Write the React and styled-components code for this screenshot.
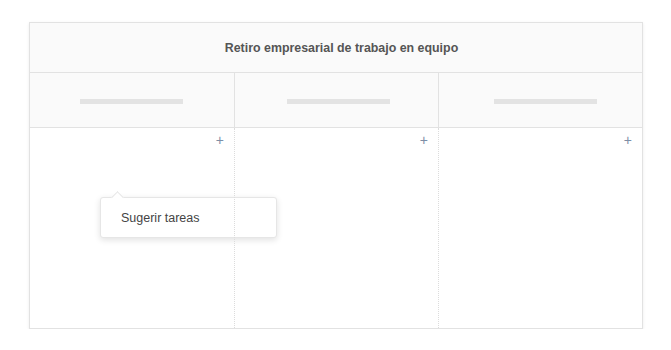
import React from "react";
import styled, { createGlobalStyle } from "styled-components";

const GlobalStyle = createGlobalStyle`
  html, body {
    margin: 0;
    background: #ffffff;
    font-family: "Liberation Sans", Arial, sans-serif;
  }
`;

const Page = styled.div`
  padding: 22px 28px 0 29px;
`;

const Board = styled.div`
  width: 614px;
  box-sizing: border-box;
  border: 1px solid #e2e2e2;
  box-shadow: 0 1px 3px rgba(0, 0, 0, 0.08);
  background: #fff;
`;

const TitleRow = styled.div`
  height: 49px;
  display: flex;
  align-items: center;
  justify-content: center;
  padding-left: 11px;
  background: #fafafa;
  border-bottom: 1px solid #e2e2e2;
  font-size: 12.4px;
  font-weight: 700;
  color: #555;
`;

const HeadRow = styled.div`
  display: grid;
  grid-template-columns: repeat(3, 1fr);
  height: 54px;
  background: #fafafa;
  border-bottom: 1px solid #e2e2e2;
`;

const HeadCell = styled.div`
  display: flex;
  align-items: center;
  padding-left: ${({ inset }) => inset}px;
  border-left: ${({ first }) => (first ? "none" : "1px solid #e2e2e2")};
`;

const Placeholder = styled.div`
  width: 103px;
  height: 5px;
  margin-top: 2px;
  background: #e3e3e3;
`;

const BodyRow = styled.div`
  display: grid;
  grid-template-columns: repeat(3, 1fr);
  height: 200px;
`;

const Column = styled.div`
  position: relative;
  border-left: ${({ first }) => (first ? "none" : "1px dotted #dcdcdc")};
`;

const AddButton = styled.div`
  position: absolute;
  top: 5px;
  right: 10px;
  font-size: 14px;
  line-height: 14px;
  color: #7d8ea6;
  cursor: pointer;
`;

const Popover = styled.div`
  position: absolute;
  left: 70px;
  top: 69px;
  width: 177px;
  height: 41px;
  box-sizing: border-box;
  background: #fff;
  border: 1px solid #e6e6e6;
  border-radius: 3px;
  box-shadow: 0 2px 6px rgba(0, 0, 0, 0.12);
  display: flex;
  align-items: center;
  padding-left: 20px;
  font-size: 12.5px;
  color: #444;

  &::before {
    content: "";
    position: absolute;
    top: -5px;
    left: 12px;
    width: 8px;
    height: 8px;
    background: #fff;
    border-left: 1px solid #e6e6e6;
    border-top: 1px solid #e6e6e6;
    transform: rotate(45deg);
  }
`;

const columns = [0, 1, 2];
const insets = [50, 52, 55];

export default function App() {
  return (
    <>
      <GlobalStyle />
      <Page>
        <Board>
          <TitleRow>Retiro empresarial de trabajo en equipo</TitleRow>
          <HeadRow>
            {columns.map((i) => (
              <HeadCell key={i} first={i === 0} inset={insets[i]}>
                <Placeholder />
              </HeadCell>
            ))}
          </HeadRow>
          <BodyRow>
            {columns.map((i) => (
              <Column key={i} first={i === 0}>
                <AddButton>+</AddButton>
                {i === 0 && <Popover>Sugerir tareas</Popover>}
              </Column>
            ))}
          </BodyRow>
        </Board>
      </Page>
    </>
  );
}
